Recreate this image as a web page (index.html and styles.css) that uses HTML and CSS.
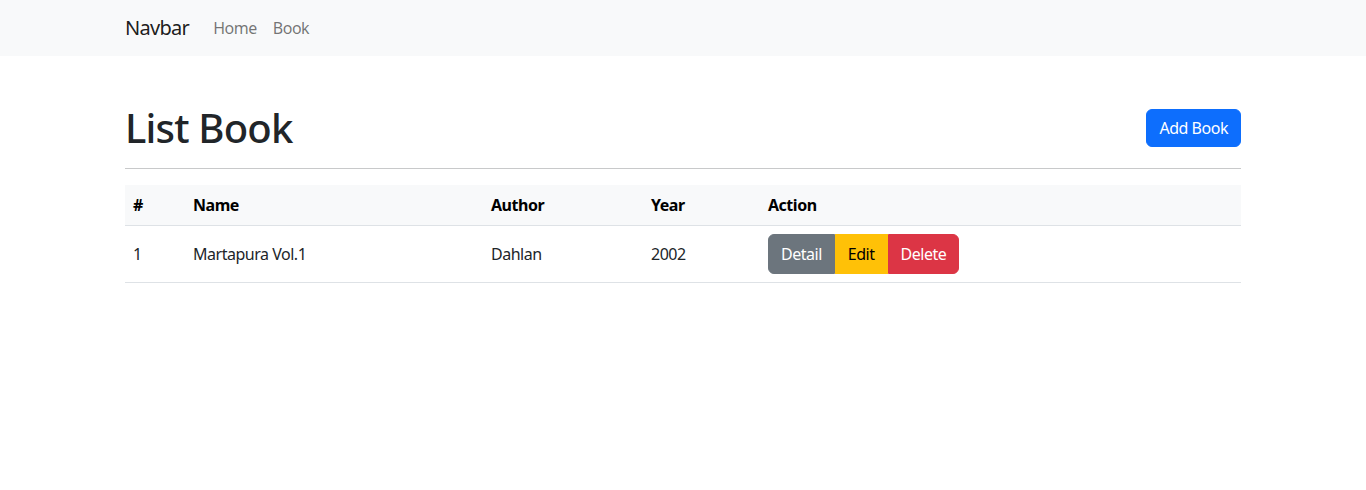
FILE: index.html
```html
<!DOCTYPE html>
<html>
<head>
<meta charset="utf-8">
<link rel="stylesheet" href="styles.css">
</head>
<body>
<nav class="navbar">
  <div class="container nav-inner">
    <a class="brand" href="#">Navbar</a>
    <a class="nav-link" href="#">Home</a>
    <a class="nav-link" href="#">Book</a>
  </div>
</nav>
<main class="container main">
  <div class="head-row">
    <h1>List Book</h1>
    <button class="btn btn-primary">Add Book</button>
  </div>
  <hr>
  <table class="table">
    <thead>
      <tr>
        <th class="c1">#</th>
        <th class="c2">Name</th>
        <th class="c3">Author</th>
        <th class="c4">Year</th>
        <th>Action</th>
      </tr>
    </thead>
    <tbody>
      <tr>
        <td>1</td>
        <td>Martapura Vol.1</td>
        <td>Dahlan</td>
        <td>2002</td>
        <td>
          <div class="btn-group">
            <button class="btn btn-secondary">Detail</button>
            <button class="btn btn-warning">Edit</button>
            <button class="btn btn-danger">Delete</button>
          </div>
        </td>
      </tr>
    </tbody>
  </table>
</main>
</body>
</html>
```

FILE: styles.css
```css
* { box-sizing: border-box; }
body {
  margin: 0;
  font-family: "Noto Sans", "Open Sans", sans-serif;
  font-size: 16px;
  line-height: 1.5;
  letter-spacing: -0.03em;
  color: #212529;
  background: #fff;
}
.container {
  width: 1140px;
  margin: 0 auto;
  padding: 0 12px;
}
.navbar {
  background: #f8f9fa;
  padding: 8px 0;
}
.nav-inner {
  display: flex;
  align-items: center;
}
.brand {
  font-size: 20px;
  line-height: 30px;
  padding: 5px 0;
  margin-right: 16px;
  letter-spacing: -0.035em;
  color: rgba(0,0,0,.9);
  text-decoration: none;
}
.nav-link {
  padding: 8px;
  color: rgba(0,0,0,.55);
  text-decoration: none;
}
.main {
  padding-top: 48px;
}
.head-row {
  display: flex;
  align-items: center;
  justify-content: space-between;
  margin-bottom: 8px;
}
h1 {
  margin: 0;
  font-size: 40px;
  font-weight: 500;
  line-height: 1.2;
  letter-spacing: -0.02em;
}
hr {
  margin: 16px 0;
  border: 0;
  border-top: 1px solid #c8c9ca;
}
.btn {
  font-family: inherit;
  font-size: 16px;
  line-height: 1.5;
  letter-spacing: -0.03em;
  padding: 6px 12px;
  border: 1px solid transparent;
  border-radius: 6px;
  cursor: pointer;
}
.btn-primary { background: #0d6efd; border-color: #0d6efd; color: #fff; }
.btn-secondary { background: #6c757d; border-color: #6c757d; color: #fff; }
.btn-warning { background: #ffc107; border-color: #ffc107; color: #000; }
.btn-danger { background: #dc3545; border-color: #dc3545; color: #fff; }
.btn-group { display: inline-flex; vertical-align: middle; }
.btn-group .btn { border-radius: 0; padding: 7px 12px; }
.btn-group .btn:first-child { border-radius: 6px 0 0 6px; }
.btn-group .btn:last-child { border-radius: 0 6px 6px 0; }
.table {
  width: 100%;
  border-collapse: collapse;
  margin-bottom: 16px;
}
.table th, .table td {
  text-align: left;
  padding: 8px;
  border-bottom: 1px solid #dee2e6;
  vertical-align: middle;
}
.table thead th {
  background: #f8f9fa;
  color: #000;
  font-weight: 700;
}
.c1 { width: 60px; }
.c2 { width: 298px; }
.c3 { width: 160px; }
.c4 { width: 117px; }
```
